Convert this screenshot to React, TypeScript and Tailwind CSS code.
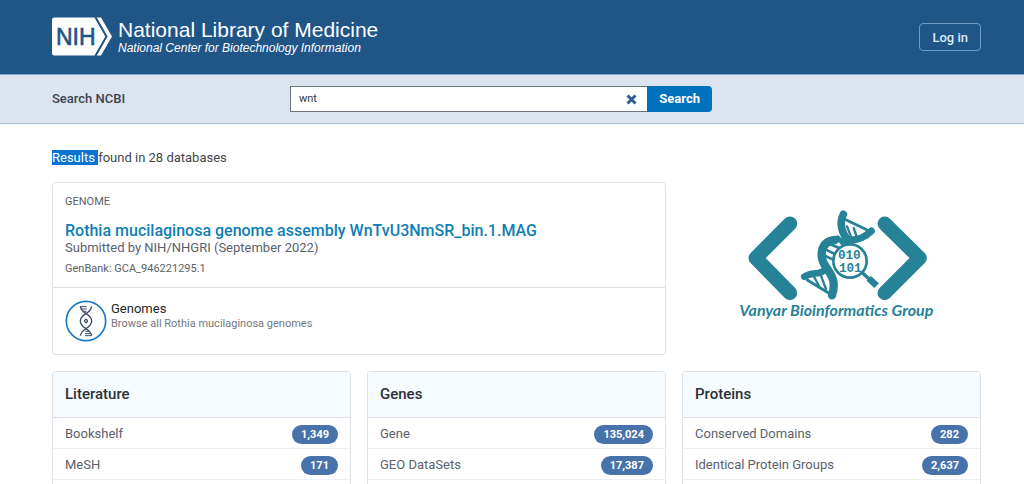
const databases = [
  {
    title: "Literature",
    items: [
      { name: "Bookshelf", count: "1,349" },
      { name: "MeSH", count: "171" },
    ],
  },
  {
    title: "Genes",
    items: [
      { name: "Gene", count: "135,024" },
      { name: "GEO DataSets", count: "17,387" },
    ],
  },
  {
    title: "Proteins",
    items: [
      { name: "Conserved Domains", count: "282" },
      { name: "Identical Protein Groups", count: "2,637" },
    ],
  },
];

const NihLogo = () => (
  <svg width="60" height="40" viewBox="0 0 60 40" role="img" aria-label="NIH">
    <path d="M2.5 0.5H42.5L53.5 19.5L42.5 38.5H2.5Q0 38.5 0 36V3Q0 0.5 2.5 0.5Z" fill="#fff" />
    <path d="M44.5 0.5H49L60 19.5L49 38.5H44.5L55.5 19.5Z" fill="#fff" />
    <path d="M43.5 0L54.5 19.5L43.5 39" fill="none" stroke="#205587" strokeWidth="1.6" />
    <text
      x="4"
      y="27.5"
      fontFamily="Liberation Sans, sans-serif"
      fontSize="23"
      fill="#205587"
      stroke="#205587"
      strokeWidth="0.6"
    >
      NIH
    </text>
  </svg>
);

const GenomeIcon = () => (
  <svg width="42" height="42" viewBox="0 0 126 126" fill="none" stroke="#3d4a68" strokeWidth="4" aria-hidden="true">
    <circle cx="63" cy="63" r="59" fill="#fff" stroke="#1b7dbd" strokeWidth="5" />
    <path d="M80 19C76 44 46 40 46 63C46 86 76 84 80 107" />
    <path d="M46 19C50 44 80 40 80 63C80 86 50 84 46 107" />
    <path d="M45 20H65M49 27H65M54 34H64M61 94H73M60 101H78M60 107H80" strokeWidth="3" />
    <circle cx="63" cy="63" r="5" strokeWidth="3" />
    <path d="M63 56V70" strokeWidth="3" />
  </svg>
);

const VanyarLogo = () => (
  <svg
    className="h-[130px] w-[220px]"
    viewBox="0 0 660 390"
    fill="none"
    stroke="#268297"
    strokeLinecap="round"
    strokeLinejoin="round"
    role="img"
    aria-label="Vanyar Bioinformatics Group"
  >
    <path d="M183 71L80 174L183 279" strokeWidth="43" />
    <path d="M467 71L572 174L467 279" strokeWidth="43" />

    {/* helix, upper end */}
    <path d="M343 43C330 70 337 102 364 128" strokeWidth="23" />
    <path d="M427 93C402 118 376 123 348 119" strokeWidth="21" />
    <path d="M352 60L421 93" strokeWidth="9" />
    <path d="M354 79L366 110M374 84L383 110" strokeWidth="7" />

    {/* helix, crossing and lower end */}
    <path d="M318 120C270 126 271 173 291 201C309 227 322 246 309 286" strokeWidth="25" />
    <path d="M226 230C254 213 275 228 291 205" strokeWidth="20" />
    <path d="M235 240L305 283" strokeWidth="9" />
    <path d="M254 228L270 258M275 225L291 267" strokeWidth="7" />
    <path d="M286 166L317 181M289 148L323 165M301 132L333 145" strokeWidth="8" />
    <path d="M326 113L350 139" strokeWidth="14" />

    {/* magnifier */}
    <path d="M404 222L427 243" strokeWidth="11" />
    <path d="M419 235L443 257" strokeWidth="20" strokeLinecap="butt" />
    <circle cx="363" cy="183" r="50" fill="#fff" strokeWidth="8" />
    <g
      fill="#268297"
      stroke="none"
      fontFamily="Liberation Mono, monospace"
      fontWeight="700"
      fontSize="38"
      textAnchor="middle"
    >
      <text x="361" y="177">010</text>
      <text x="364" y="216">101</text>
    </g>
    <text
      x="322"
      y="347"
      fill="#268297"
      stroke="none"
      fontFamily="Lato, sans-serif"
      fontStyle="italic"
      fontWeight="700"
      fontSize="48"
      textAnchor="middle"
    >
      Vanyar Bioinformatics Group
    </text>
  </svg>
);

const Header = () => (
  <header className="flex h-[74px] items-center justify-between bg-[#205587] pr-[43px] pl-[52px]">
    <a href="/" className="flex items-center gap-1.5 text-white">
      <NihLogo />
      <span className="flex flex-col font-['Liberation_Sans',sans-serif]">
        <span className="text-[21px] leading-[22px]">National Library of Medicine</span>
        <span className="text-[12px] leading-[14px] italic">National Center for Biotechnology Information</span>
      </span>
    </a>
    <button
      type="button"
      className="h-7 rounded border border-[#6f9bc4] px-3 text-[13px] leading-none font-medium text-[#dcebfa]"
    >
      Log in
    </button>
  </header>
);

const SearchBar = () => (
  <form className="flex h-[50px] items-center border-t border-b border-t-[#7fa6cf] border-b-[#a9bfdc] bg-[#dce4ef] pr-[43px] pl-[52px]">
    <label htmlFor="term" className="w-[238px] text-[13px] font-medium text-[#3e4550]">
      Search NCBI
    </label>
    <div className="flex h-[26px] w-[422px]">
      <div className="flex min-w-0 flex-1 items-center border border-r-0 border-[#6c757d] bg-white">
        <input
          id="term"
          type="text"
          defaultValue="wnt"
          className="min-w-0 flex-1 px-2 text-[11px] text-[#303438] outline-none"
        />
        <button type="button" aria-label="Clear search" className="px-2.5">
          <svg width="11" height="11" viewBox="0 0 11 11" stroke="#2f5c94" strokeWidth="3" aria-hidden="true">
            <path d="M1.5 1.5L9.5 9.5M9.5 1.5L1.5 9.5" />
          </svg>
        </button>
      </div>
      <button type="submit" className="rounded-r bg-[#0071bc] px-3 text-[13px] font-bold text-white">
        Search
      </button>
    </div>
  </form>
);

export default function App() {
  return (
    <div className="flex min-h-screen flex-col bg-white font-[Roboto,sans-serif]">
      <Header />
      <SearchBar />

      <main className="flex flex-1 flex-col pr-[43px] pl-[52px]">
        <p className="mt-6 text-[13px] leading-5 text-[#42474c]">
          <span className="bg-[#0a74d1] text-white">Results </span>found in 28 databases
        </p>

        {/* Featured genome */}
        <div className="mt-3.5 grid grid-cols-3 gap-4">
          <section className="col-span-2 rounded border border-[#dee2e6]">
            <div className="border-b border-[#dee2e6] px-3 pt-3 pb-2.5">
              <p className="text-[11px] leading-[14px] text-[#5b616b]">GENOME</p>
              <h2 className="mt-3.5 text-[16px] leading-4 font-medium">
                <a href="#assembly" className="text-[#0f7fb5]">
                  Rothia mucilaginosa genome assembly WnTvU3NmSR_bin.1.MAG
                </a>
              </h2>
              <p className="text-[13px] leading-[18px] text-[#5b616b]">Submitted by NIH/NHGRI (September 2022)</p>
              <p className="mt-1 text-[11px] leading-4 text-[#5b616b]">GenBank: GCA_946221295.1</p>
            </div>
            <div className="flex gap-1 px-3 py-3">
              <GenomeIcon />
              <div>
                <a href="#genomes" className="block text-[13px] leading-[18px] text-[#212529]">
                  Genomes
                </a>
                <p className="text-[11px] leading-3 text-[#73787d]">Browse all Rothia mucilaginosa genomes</p>
              </div>
            </div>
          </section>
          <div className="flex items-start justify-end pt-[18px] pr-8">
            <VanyarLogo />
          </div>
        </div>

        {/* Database groups */}
        <div className="mt-4 grid flex-1 grid-cols-3 gap-4">
          {databases.map((group) => (
            <section key={group.title} className="rounded-t border border-b-0 border-[#dee2e6]">
              <h2 className="border-b border-[#dee2e6] bg-[#f5fbff] px-3 py-3 text-[15px] leading-[21px] font-medium text-[#2b3138]">
                {group.title}
              </h2>
              <ul>
                {group.items.map((item) => (
                  <li key={item.name} className="border-b border-[#eef0f2]">
                    <a
                      href={`#${item.name}`}
                      className="flex h-[30px] items-center justify-between px-3 pt-0.5 text-[13px] text-[#5b616b]"
                    >
                      {item.name}
                      <span className="rounded-full bg-[#4773aa] px-[9px] text-[11px] leading-[19px] font-bold text-white">
                        {item.count}
                      </span>
                    </a>
                  </li>
                ))}
              </ul>
            </section>
          ))}
        </div>
      </main>
    </div>
  );
}
